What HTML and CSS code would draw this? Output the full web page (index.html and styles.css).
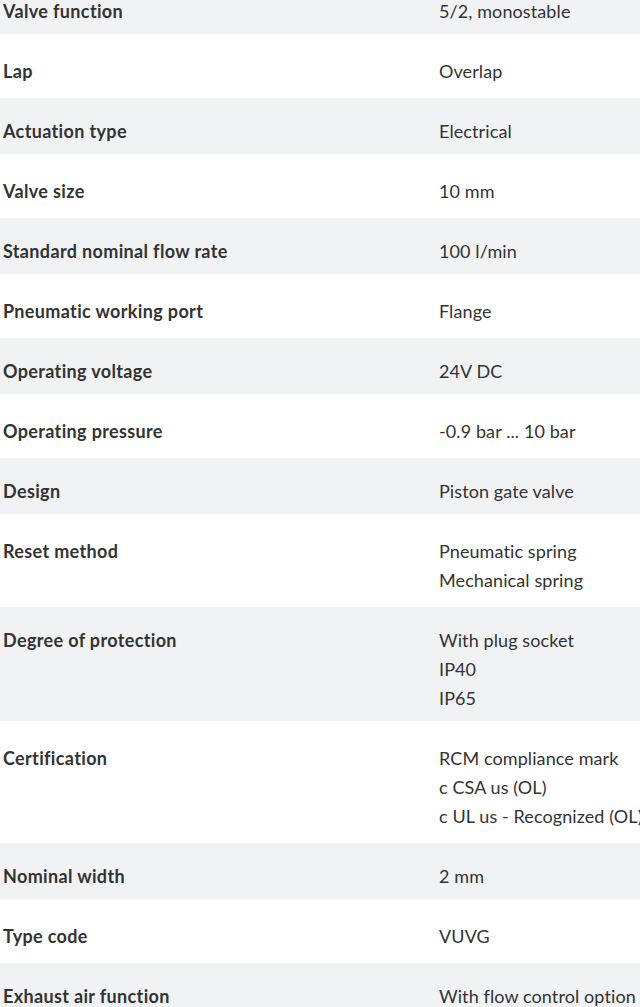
FILE: index.html
```html
<!DOCTYPE html>
<html lang="en">
<head>
<meta charset="utf-8">
<title>Technical data</title>
<link rel="stylesheet" href="styles.css">
</head>
<body>
<div class="viewport">
  <div class="specs">
    <div class="row alt"><div class="label">Valve function</div><div class="value">5/2, monostable</div></div>
    <div class="row"><div class="label">Lap</div><div class="value">Overlap</div></div>
    <div class="row alt"><div class="label">Actuation type</div><div class="value">Electrical</div></div>
    <div class="row"><div class="label">Valve size</div><div class="value">10 mm</div></div>
    <div class="row alt"><div class="label">Standard nominal flow rate</div><div class="value">100 l/min</div></div>
    <div class="row"><div class="label">Pneumatic working port</div><div class="value">Flange</div></div>
    <div class="row alt"><div class="label">Operating voltage</div><div class="value">24V DC</div></div>
    <div class="row"><div class="label">Operating pressure</div><div class="value">-0.9 bar ... 10 bar</div></div>
    <div class="row alt"><div class="label">Design</div><div class="value">Piston gate valve</div></div>
    <div class="row"><div class="label">Reset method</div><div class="value">Pneumatic spring<br>Mechanical spring</div></div>
    <div class="row alt"><div class="label">Degree of protection</div><div class="value">With plug socket<br>IP40<br>IP65</div></div>
    <div class="row"><div class="label">Certification</div><div class="value">RCM compliance mark<br>c CSA us (OL)<br>c UL us - Recognized (OL)</div></div>
    <div class="row alt"><div class="label">Nominal width</div><div class="value">2 mm</div></div>
    <div class="row"><div class="label">Type code</div><div class="value">VUVG</div></div>
    <div class="row alt"><div class="label">Exhaust air function</div><div class="value">With flow control option</div></div>
  </div>
</div>
</body>
</html>
```
FILE: styles.css
```css
html, body {
  margin: 0;
  padding: 0;
  background: #ffffff;
}
.viewport {
  width: 640px;
  height: 1007px;
  overflow: hidden;
}
.specs {
  margin-top: -26px;
  font-family: Lato, "Open Sans", sans-serif;
  font-size: 18px;
  line-height: 29px;
  color: #333333;
}
.row {
  display: grid;
  grid-template-columns: 436px 1fr;
  border-top: 4px solid #ffffff;
  padding: 19px 0 8px 0;
  background: #ffffff;
}
.row.alt {
  background: #f1f2f4;
}
.label {
  padding-left: 3px;
  font-weight: 700;
  letter-spacing: 0.35px;
  white-space: nowrap;
}
.value {
  padding-left: 3px;
  letter-spacing: 0.1px;
  white-space: nowrap;
}
```
